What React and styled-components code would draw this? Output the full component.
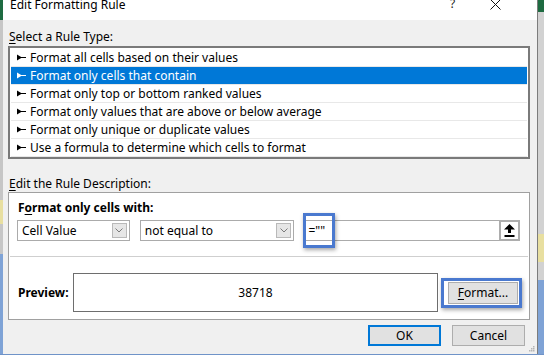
import styled, { createGlobalStyle } from "styled-components";

const GlobalStyle = createGlobalStyle`
  html, body {
    margin: 0;
    padding: 0;
    overflow: hidden;
    background: #f0f0f0;
  }
  body {
    font-family: "Noto Sans", "Open Sans", sans-serif;
    font-size: 12px;
    color: #000;
  }
`;

const Screen = styled.div`
  width: 544px;
  height: 357px;
  display: flex;
  flex-direction: column;
  overflow: hidden;
`;

const Top = styled.div`
  display: flex;
  height: 354px;
  flex: none;
`;

const Edge = styled.div`
  width: ${(p) => p.$w}px;
  flex: ${(p) => (p.$grow ? 1 : "none")};
  display: flex;
  flex-direction: column;
  background: #c9c9c9;
`;

const EdgeBlock = styled.div`
  height: ${(p) => p.$h}px;
  flex: ${(p) => (p.$grow ? 1 : "none")};
  background: ${(p) => p.$c};
`;

const Dialog = styled.div`
  position: relative;
  width: 534px;
  display: flex;
  flex-direction: column;
  background: #f0f0f0;
  border-right: 1px solid #7c7c7c;
`;

const TitleBar = styled.div`
  height: 20px;
  background: #fff;
  display: flex;
  align-items: flex-start;
  padding: 0 0 0 7px;
`;

const TitleText = styled.div`
  flex: 1;
  font-size: 12px;
  line-height: 16px;
  margin-top: -3px;
`;

const HelpMark = styled.div`
  width: 16px;
  font-size: 12px;
  line-height: 16px;
  margin-top: -4px;
  color: #222;
`;

const CloseIcon = styled.svg`
  margin: -1px 36px 0 24px;
`;

const Body = styled.div`
  flex: 1;
  display: flex;
  flex-direction: column;
  padding: 0 7px 0 5px;
`;

const SectionLabel = styled.div`
  line-height: 16px;
  margin-top: ${(p) => p.$mt}px;
  padding-left: 1px;
`;

const U = styled.span`
  text-decoration: underline;
  text-underline-offset: 2px;
`;

const ListBox = styled.div`
  margin-top: 1px;
  height: 113px;
  box-sizing: border-box;
  border: 2px solid #7a7a7a;
  background: #fff;
  padding: 1px;
`;

const Row = styled.div`
  height: 17px;
  border-bottom: 1px solid #e8e8e8;
  display: flex;
  align-items: center;
  padding-left: 6px;
  background: ${(p) => (p.$selected ? "#0078d7" : "#fff")};
  color: ${(p) => (p.$selected ? "#fff" : "#000")};
  white-space: nowrap;
`;

const RowIcon = styled.svg`
  margin-right: 4px;
  flex: none;
`;

const Panel = styled.div`
  height: 128px;
  box-sizing: border-box;
  border: 1px solid #a0a0a0;
  background: #fff;
  padding: 0 9px 0 8px;
  display: flex;
  flex-direction: column;
`;

const BoldLabel = styled.div`
  font-weight: 700;
  line-height: 16px;
  margin-top: ${(p) => p.$mt || 0}px;
  padding-left: 1px;
`;

const ComboRow = styled.div`
  display: flex;
  margin-top: 4px;
  height: 21px;
`;

const Field = styled.div`
  position: relative;
  width: ${(p) => p.$w}px;
  margin-left: ${(p) => p.$ml || 0}px;
  box-sizing: border-box;
  border: 1px solid #ababab;
  display: flex;
  align-items: center;
  padding: 0 2px 0 4px;
  background: #fff;
`;

const FieldText = styled.div`
  flex: 1;
  white-space: nowrap;
`;

const DropButton = styled.div`
  width: 15px;
  height: 15px;
  box-sizing: border-box;
  border: 1px solid #b9b9b9;
  background: #e6e6e6;
  display: flex;
  align-items: center;
  justify-content: center;
`;

const RefButton = styled.div`
  width: 21px;
  height: 21px;
  margin: -1px -3px -1px 0;
  box-sizing: border-box;
  border: 2px solid #adadad;
  background: #fdfdfd;
  display: flex;
  align-items: center;
  justify-content: center;
`;

const Callout = styled.div`
  position: absolute;
  left: ${(p) => p.$l}px;
  top: ${(p) => p.$t}px;
  width: ${(p) => p.$w}px;
  height: ${(p) => p.$h}px;
  box-sizing: border-box;
  border: 3px solid #4a79cf;
  box-shadow: 1px 2px 4px rgba(0, 0, 0, 0.35);
  pointer-events: none;
`;

const Rule = styled.div`
  height: 1px;
  background: #cfcfcf;
  margin: 15px -8px 0 -7px;
`;

const PreviewRow = styled.div`
  display: flex;
  align-items: center;
  margin-top: 16px;
  height: 39px;
`;

const PreviewLabel = styled.div`
  width: 55px;
  font-weight: 700;
  padding-left: 1px;
`;

const PreviewBox = styled.div`
  width: 365px;
  height: 39px;
  box-sizing: border-box;
  border: 1px solid #6e6e6e;
  display: flex;
  align-items: center;
  justify-content: center;
  font-size: 12px;
`;

const Button = styled.div`
  position: relative;
  width: ${(p) => p.$w}px;
  height: ${(p) => p.$h}px;
  margin-left: ${(p) => p.$ml || 0}px;
  box-sizing: border-box;
  border: ${(p) => (p.$default ? "2px solid #0078d7" : "1px solid #adadad")};
  background: #e1e1e1;
  display: flex;
  align-items: center;
  justify-content: center;
`;

const Footer = styled.div`
  display: flex;
  justify-content: flex-end;
  margin-top: 5px;
  padding-right: 5px;
`;

const Grip = styled.svg`
  position: absolute;
  right: 2px;
  bottom: 2px;
`;

const SheetStrip = styled.div`
  flex: none;
  height: 3px;
  box-sizing: border-box;
  background: #fff;
  border-top: 1px solid #6f93c8;
  display: flex;
  overflow: hidden;
`;

const SheetCell = styled.div`
  width: ${(p) => p.$w}px;
  font-weight: 700;
  font-size: 13px;
  line-height: 18px;
  color: #1d1d1d;
  white-space: nowrap;
  text-align: center;
`;

const Arrow = () => (
  <RowIcon width="9" height="7" viewBox="0 0 9 7">
    <polygon points="0,0.5 5,3.5 0,6.5" fill="currentColor" />
    <rect x="4" y="3" width="5" height="1" fill="currentColor" />
  </RowIcon>
);

const Chevron = () => (
  <svg width="8" height="5" viewBox="0 0 8 5">
    <polyline points="0.5,0.5 4,4 7.5,0.5" fill="none" stroke="#7a7a7a" strokeWidth="1" />
  </svg>
);

const UploadIcon = () => (
  <svg width="11" height="13" viewBox="0 0 11 13">
    <polygon points="5.5,0 11,5.5 7,5.5 7,9 4,9 4,5.5 0,5.5" fill="#000" />
    <rect x="0.5" y="11" width="10" height="2" fill="#000" />
  </svg>
);

const ruleTypes = [
  "Format all cells based on their values",
  "Format only cells that contain",
  "Format only top or bottom ranked values",
  "Format only values that are above or below average",
  "Format only unique or duplicate values",
  "Use a formula to determine which cells to format",
];

const App = () => {
  return (
    <>
      <GlobalStyle />
      <Screen>
        <Top>
          <Edge $w={3}>
            <EdgeBlock $h={20} $c="#1e6b41" />
            <EdgeBlock $h={180} $c="#c6c6c6" />
            <EdgeBlock $h={24} $c="#e8dfa0" />
            <EdgeBlock $h={30} $c="#c6c6c6" />
            <EdgeBlock $grow $c="#7fa3d6" />
          </Edge>
          <Dialog>
            <TitleBar>
              <TitleText>Edit Formatting Rule</TitleText>
              <HelpMark>?</HelpMark>
              <CloseIcon width="11" height="11" viewBox="0 0 11 11">
                <path d="M0.5 0.5 L10.5 10.5 M10.5 0.5 L0.5 10.5" stroke="#111" strokeWidth="1" />
              </CloseIcon>
            </TitleBar>
            <Body>
              <SectionLabel $mt={9}>
                <U>S</U>elect a Rule Type:
              </SectionLabel>
              <ListBox>
                {ruleTypes.map((t, i) => (
                  <Row key={t} $selected={i === 1}>
                    <Arrow />
                    {t}
                  </Row>
                ))}
              </ListBox>
              <SectionLabel $mt={17}>
                <U>E</U>dit the Rule Description:
              </SectionLabel>
              <Panel>
                <BoldLabel $mt={7}>
                  F<U>o</U>rmat only cells with:
                </BoldLabel>
                <ComboRow>
                  <Field $w={113}>
                    <FieldText>Cell Value</FieldText>
                    <DropButton>
                      <Chevron />
                    </DropButton>
                  </Field>
                  <Field $w={155} $ml={10}>
                    <FieldText>not equal to</FieldText>
                    <DropButton>
                      <Chevron />
                    </DropButton>
                  </Field>
                  <Field $w={217} $ml={9}>
                    <FieldText>=""</FieldText>
                    <RefButton>
                      <UploadIcon />
                    </RefButton>
                    <Callout $l={-1} $t={-8} $w={32} $h={35} />
                  </Field>
                </ComboRow>
                <Rule />
                <PreviewRow>
                  <PreviewLabel>Preview:</PreviewLabel>
                  <PreviewBox>38718</PreviewBox>
                  <Button $w={70} $h={22} $ml={10}>
                    <span>
                      <U>F</U>ormat...
                    </span>
                    <Callout $l={-8} $t={-5} $w={81} $h={30} />
                  </Button>
                </PreviewRow>
              </Panel>
              <Footer>
                <Button $w={73} $h={21} $default>
                  OK
                </Button>
                <Button $w={73} $h={21} $ml={11}>
                  Cancel
                </Button>
              </Footer>
            </Body>
            <Grip width="7" height="7" viewBox="0 0 7 7">
              <rect x="5" y="1" width="1.5" height="1.5" fill="#b5b5b5" />
              <rect x="3" y="3" width="1.5" height="1.5" fill="#b5b5b5" />
              <rect x="5" y="3" width="1.5" height="1.5" fill="#b5b5b5" />
              <rect x="1" y="5" width="1.5" height="1.5" fill="#b5b5b5" />
              <rect x="3" y="5" width="1.5" height="1.5" fill="#b5b5b5" />
              <rect x="5" y="5" width="1.5" height="1.5" fill="#b5b5b5" />
            </Grip>
          </Dialog>
          <Edge $grow>
            <EdgeBlock $h={12} $c="#1e6b41" />
            <EdgeBlock $h={222} $c="#d2d2d2" />
            <EdgeBlock $h={28} $c="#e8dfa0" />
            <EdgeBlock $h={18} $c="#d2d2d2" />
            <EdgeBlock $grow $c="#7fa3d6" />
          </Edge>
        </Top>
        <SheetStrip>
          <SheetCell $w={140}>Make Brrt</SheetCell>
          <SheetCell $w={130}>Gross Weight</SheetCell>
          <SheetCell $w={110}>Net Weight</SheetCell>
          <SheetCell $w={130}>Make Lewel</SheetCell>
        </SheetStrip>
      </Screen>
    </>
  );
};

export default App;
